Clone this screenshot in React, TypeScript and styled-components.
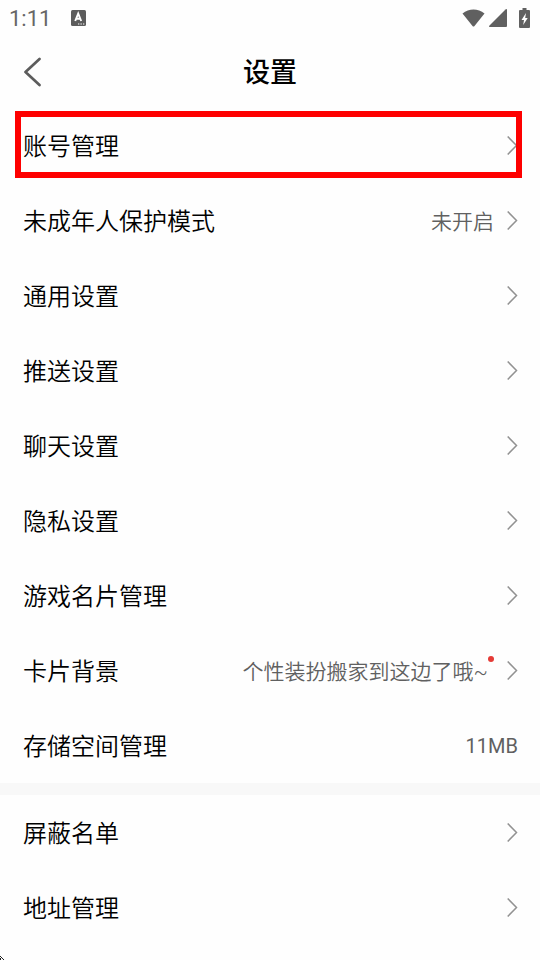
import React from 'react';
import styled, { createGlobalStyle } from 'styled-components';

const GlobalStyle = createGlobalStyle`
  * { box-sizing: border-box; }
  body {
    margin: 0;
    background: #fefefe;
    color: #000;
    font-family: Roboto, "Noto Sans CJK SC", sans-serif;
  }
  button { font: inherit; color: inherit; background: none; border: 0; padding: 0; }
`;

const Screen = styled.div`
  position: relative;
  min-height: 100vh;
  overflow: hidden;
`;

const StatusBar = styled.div`
  display: flex;
  align-items: center;
  height: 36px;
  padding: 0 10px 0 9px;
  color: #666;
`;

const Clock = styled.time`
  font-size: 22px;
  line-height: 24px;
  padding-top: 2px;
`;

const StatusBadge = styled.svg`
  margin-left: 20px;
`;

const StatusIcons = styled.div`
  display: flex;
  align-items: center;
  gap: 4px;
  margin-left: auto;
`;

const Battery = styled.svg`
  margin-left: 8px;
`;

const Header = styled.header`
  display: grid;
  grid-template-columns: 48px 1fr 48px;
  align-items: center;
  height: 72px;
`;

const BackButton = styled.button`
  display: flex;
  align-items: center;
  height: 48px;
  padding-left: 23px;
`;

const Title = styled.h1`
  margin: 0;
  padding-top: 2px;
  text-align: center;
  font-size: 27px;
  line-height: 36px;
  font-weight: 500;
`;

const Group = styled.section`
  & + & { border-top: 12px solid #f8f8f8; }
`;

const Row = styled.button`
  position: relative;
  display: flex;
  align-items: center;
  width: 100%;
  height: 75px;
  padding: 0 22px 0 23px;
  text-align: left;
`;

const Label = styled.span`
  flex: 1;
  padding-top: 2px;
  font-size: 24px;
  line-height: 36px;
  font-weight: 350;
`;

const Value = styled.span<{ $latin?: boolean; $dot?: boolean }>`
  position: relative;
  padding-top: ${({ $latin }) => ($latin ? '0' : '2px')};
  margin-right: ${({ $dot }) => ($dot ? '6px' : '0')};
  color: #606060;
  font-size: ${({ $latin }) => ($latin ? '20px' : '21px')};
  line-height: 32px;
  font-weight: ${({ $latin }) => ($latin ? 400 : 350)};
`;

const Dot = styled.i`
  position: absolute;
  top: 2px;
  right: -6px;
  width: 6px;
  height: 6px;
  border-radius: 50%;
  background: #e53b36;
`;

const Arrow = styled.svg`
  margin-left: 12px;
`;

const Highlight = styled.span`
  position: absolute;
  inset: 3px 18px 5px 15px;
  border: 6px solid #fe0000;
  pointer-events: none;
`;

const Pointer = styled.svg`
  position: absolute;
  left: 0;
  bottom: 0;
`;

type Item = { label: string; value?: string; dot?: boolean; plain?: boolean; marked?: boolean };

const groups: Item[][] = [
  [
    { label: '账号管理', marked: true },
    { label: '未成年人保护模式', value: '未开启' },
    { label: '通用设置' },
    { label: '推送设置' },
    { label: '聊天设置' },
    { label: '隐私设置' },
    { label: '游戏名片管理' },
    { label: '卡片背景', value: '个性装扮搬家到这边了哦~', dot: true },
    { label: '存储空间管理', value: '11MB', plain: true },
  ],
  [{ label: '屏蔽名单' }, { label: '地址管理' }],
];

function SettingRow({ label, value, dot, plain, marked }: Item) {
  return (
    <Row type="button">
      <Label>{label}</Label>
      {value && <Value $latin={plain} $dot={dot}>{value}{dot && <Dot />}</Value>}
      {!plain && (
        <Arrow width="12" height="20" viewBox="0 0 12 20" fill="none" stroke="#929292" strokeWidth="1.5" aria-hidden="true">
          <path d="M1.7 .5 10.5 9.500 1.7 18.500" />
        </Arrow>
      )}
      {marked && <Highlight />}
    </Row>
  );
}

export default function App() {
  return (
    <Screen>
      <GlobalStyle />
      <StatusBar>
        <Clock>1:11</Clock>
        <StatusBadge width="15" height="16" viewBox="0 0 15 16" aria-hidden="true">
          <rect width="15" height="16" rx="1.5" fill="#5c5c5c" />
          <path d="M4.2 11 7.2 3.6 10.2 11M5.3 8.8H9.1" fill="none" stroke="#fff" strokeWidth="1.9" />
          <path d="M7 14h1.3M9.5 14h1.3M12 14h1.3" stroke="#fff" strokeWidth="1.2" />
        </StatusBadge>
        <StatusIcons>
          <svg width="23" height="18" viewBox="0 0 23 18" aria-hidden="true">
            <path d="M.5 4.5C7-1 16-1 22.500 4.500L12.500 17Q11.500 18 10.500 17Z" fill="#606060" />
          </svg>
          <svg width="18" height="18" viewBox="0 0 18 18" aria-hidden="true">
            <path d="M16.500.5Q18-.5 18 1V17Q18 18 17 18H1Q-.5 18 .5 16.500Z" fill="#606060" />
          </svg>
          <Battery width="11" height="20" viewBox="0 0 11 20" aria-hidden="true">
            <path d="M3.500 0H7.500V2H10Q11 2 11 3V19Q11 20 10 20H1Q0 20 0 19V3Q0 2 1 2H3.500Z" fill="#606060" />
            <path d="M7 5 2.500 12H5L4.200 17 8.700 10H6.200Z" fill="#fff" />
          </Battery>
        </StatusIcons>
      </StatusBar>
      <Header>
        <BackButton type="button" aria-label="返回">
          <svg width="18" height="30" viewBox="0 0 18 30" fill="none" stroke="#5c5c5c" strokeWidth="2.7" strokeLinecap="round" strokeLinejoin="round" aria-hidden="true">
            <path d="M16.500 2 2.500 15 16.500 28" />
          </svg>
        </BackButton>
        <Title>设置</Title>
      </Header>
      <main>
        {groups.map((items, index) => (
          <Group key={index}>
            {items.map((item) => <SettingRow key={item.label} {...item} />)}
          </Group>
        ))}
      </main>
      <Pointer width="4" height="5" viewBox="0 0 4 5" aria-hidden="true">
        <path d="M0 1h1v1h-1zM1 2h1v1h-1zM2 3h1v1h-1zM3 4h1v1h-1zM0 3h1v2h-1z" fill="#222" />
      </Pointer>
    </Screen>
  );
}
